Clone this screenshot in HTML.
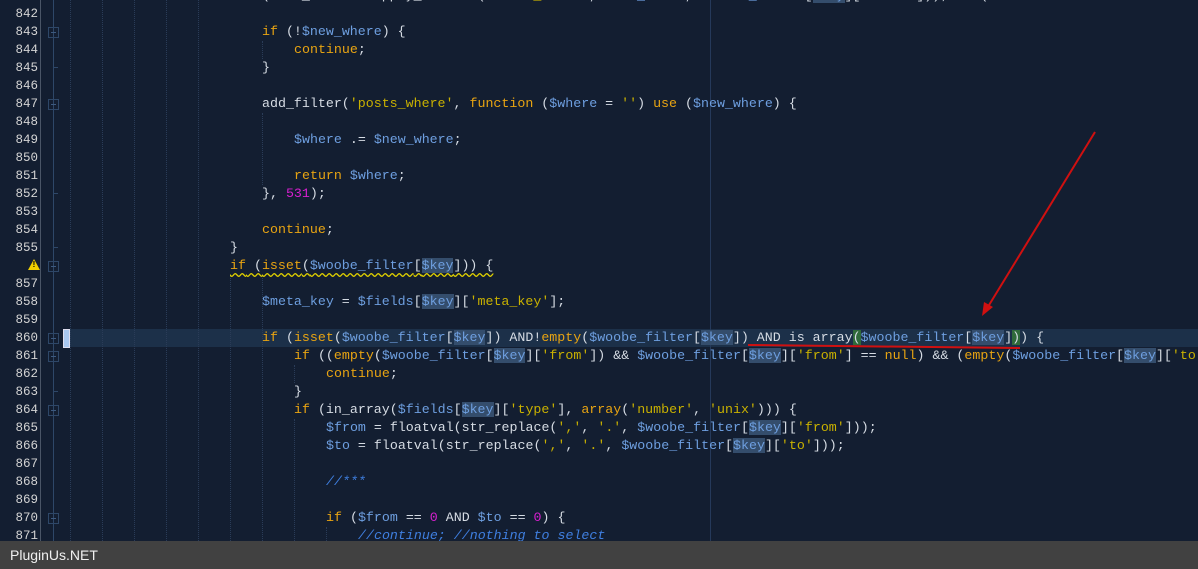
<!DOCTYPE html>
<html><head><meta charset="utf-8"><style>
html,body{margin:0;padding:0;}
body{width:1198px;height:569px;overflow:hidden;background:#131e31;position:relative;font-family:"Liberation Mono",monospace;font-size:13.3px;}
.ln{position:absolute;left:0;width:38px;text-align:right;color:#d4d4d4;height:18px;line-height:18px;font-size:12.5px;}
.c{position:absolute;height:18px;line-height:18px;white-space:pre;color:#d6dce4;}
.k{color:#e8a412}.v{color:#6e9fe0}.s{color:#c9b100}.n{color:#d81fd0}.cm{color:#3f7fe0;font-style:italic}
.h{background:#344d6c}
.g{background:#2f6a3a}
.guide{position:absolute;top:0;height:541px;border-left:1px dotted #2a3c58;}
.fold{position:absolute;left:48px;width:9px;height:9px;border:1px solid #2e4768;}
.fold:after{content:"";position:absolute;left:2px;top:4px;width:5px;height:1px;background:#3d5a80;}
.tick{position:absolute;left:53px;width:5px;height:1px;background:#2e4768;}
</style></head><body>
<div style="position:absolute;left:40px;top:0;width:1px;height:541px;background:#4a5566"></div>
<div style="position:absolute;left:53px;top:0;width:1px;height:541px;background:#2e4768"></div>
<div style="position:absolute;left:70px;top:329px;width:1128px;height:18px;background:#1c3049"></div>
<div style="position:absolute;left:63px;top:329px;width:5px;height:17px;background:#a9c8f0;border:1px solid #dde"></div>
<div class="guide" style="left:70px"></div><div class="guide" style="left:102px"></div><div class="guide" style="left:134px"></div><div class="guide" style="left:166px"></div><div class="guide" style="left:198px"></div>
<div class="guide" style="left:230px;top:275px;height:266px"></div>
<div class="guide" style="left:262px;top:41px;height:18px"></div>
<div class="guide" style="left:262px;top:113px;height:72px"></div>
<div class="guide" style="left:262px;top:275px;height:266px"></div>
<div class="guide" style="left:294px;top:365px;height:18px"></div>
<div class="guide" style="left:294px;top:419px;height:122px"></div>
<div class="guide" style="left:326px;top:527px;height:14px"></div>
<div style="position:absolute;left:710px;top:0;width:1px;height:541px;background:#25395a"></div>

<div class="ln" style="top:5px">842</div><div class="ln" style="top:23px">843</div><div class="ln" style="top:41px">844</div><div class="ln" style="top:59px">845</div><div class="ln" style="top:77px">846</div><div class="ln" style="top:95px">847</div><div class="ln" style="top:113px">848</div><div class="ln" style="top:131px">849</div><div class="ln" style="top:149px">850</div><div class="ln" style="top:167px">851</div><div class="ln" style="top:185px">852</div><div class="ln" style="top:203px">853</div><div class="ln" style="top:221px">854</div><div class="ln" style="top:239px">855</div>
<div style="position:absolute;left:28px;top:259px;width:0;height:0;border-left:6px solid transparent;border-right:6px solid transparent;border-bottom:11px solid #f0d000"></div>
<div style="position:absolute;left:28px;top:260px;width:12px;text-align:center;font:bold 8px 'Liberation Sans',sans-serif;color:#000">!</div>
<div class="ln" style="top:275px">857</div><div class="ln" style="top:293px">858</div><div class="ln" style="top:311px">859</div><div class="ln" style="top:329px">860</div><div class="ln" style="top:347px">861</div><div class="ln" style="top:365px">862</div><div class="ln" style="top:383px">863</div><div class="ln" style="top:401px">864</div><div class="ln" style="top:419px">865</div><div class="ln" style="top:437px">866</div><div class="ln" style="top:455px">867</div><div class="ln" style="top:473px">868</div><div class="ln" style="top:491px">869</div><div class="ln" style="top:509px">870</div><div class="ln" style="top:527px">871</div>
<div class="fold" style="top:27px"></div><div class="fold" style="top:99px"></div><div class="fold" style="top:261px"></div><div class="fold" style="top:333px"></div><div class="fold" style="top:351px"></div><div class="fold" style="top:405px"></div><div class="fold" style="top:513px"></div>
<div class="tick" style="top:67px"></div><div class="tick" style="top:193px"></div><div class="tick" style="top:247px"></div><div class="tick" style="top:391px"></div>

<div class="c" style="top:-13px;left:262px">(<span class="v">$new</span>_where = apply_filters(<span class="s">'woobe_where'</span>, <span class="v">$new_where</span>, <span class="v">$woobe_filter</span>[<span class="h"><span class="v">$key</span></span>][<span class="s">'value'</span>])); <span class="k">if</span> (</div>
<div class="c" style="top:23px;left:262px"><span class="k">if</span> (!<span class="v">$new_where</span>) {</div>
<div class="c" style="top:41px;left:294px"><span class="k">continue</span>;</div>
<div class="c" style="top:59px;left:262px">}</div>
<div class="c" style="top:95px;left:262px">add_filter(<span class="s">'posts_where'</span>, <span class="k">function</span> (<span class="v">$where</span> = <span class="s">''</span>) <span class="k">use</span> (<span class="v">$new_where</span>) {</div>
<div class="c" style="top:131px;left:294px"><span class="v">$where</span> .= <span class="v">$new_where</span>;</div>
<div class="c" style="top:167px;left:294px"><span class="k">return</span> <span class="v">$where</span>;</div>
<div class="c" style="top:185px;left:262px">}, <span class="n">531</span>);</div>
<div class="c" style="top:221px;left:262px"><span class="k">continue</span>;</div>
<div class="c" style="top:239px;left:230px">}</div>
<div class="c" style="top:257px;left:230px;text-decoration:underline wavy #e0d000;text-underline-offset:3px"><span class="k">if</span> (<span class="k">isset</span>(<span class="v">$woobe_filter</span>[<span class="h"><span class="v">$key</span></span>])) {</div>
<div class="c" style="top:293px;left:262px"><span class="v">$meta_key</span> = <span class="v">$fields</span>[<span class="h"><span class="v">$key</span></span>][<span class="s">'meta_key'</span>];</div>
<div class="c" style="top:329px;left:262px"><span class="k">if</span> (<span class="k">isset</span>(<span class="v">$woobe_filter</span>[<span class="h"><span class="v">$key</span></span>]) AND!<span class="k">empty</span>(<span class="v">$woobe_filter</span>[<span class="h"><span class="v">$key</span></span>]) AND is array<span class="g">(</span><span class="v">$woobe_filter</span>[<span class="h"><span class="v">$key</span></span>]<span class="g">)</span>) {</div>
<div class="c" style="top:347px;left:294px"><span class="k">if</span> ((<span class="k">empty</span>(<span class="v">$woobe_filter</span>[<span class="h"><span class="v">$key</span></span>][<span class="s">'from'</span>]) &amp;&amp; <span class="v">$woobe_filter</span>[<span class="h"><span class="v">$key</span></span>][<span class="s">'from'</span>] == <span class="k">null</span>) &amp;&amp; (<span class="k">empty</span>(<span class="v">$woobe_filter</span>[<span class="h"><span class="v">$key</span></span>][<span class="s">'to'</span>]</div>
<div class="c" style="top:365px;left:326px"><span class="k">continue</span>;</div>
<div class="c" style="top:383px;left:294px">}</div>
<div class="c" style="top:401px;left:294px"><span class="k">if</span> (in_array(<span class="v">$fields</span>[<span class="h"><span class="v">$key</span></span>][<span class="s">'type'</span>], <span class="k">array</span>(<span class="s">'number'</span>, <span class="s">'unix'</span>))) {</div>
<div class="c" style="top:419px;left:326px"><span class="v">$from</span> = floatval(str_replace(<span class="s">','</span>, <span class="s">'.'</span>, <span class="v">$woobe_filter</span>[<span class="h"><span class="v">$key</span></span>][<span class="s">'from'</span>]));</div>
<div class="c" style="top:437px;left:326px"><span class="v">$to</span> = floatval(str_replace(<span class="s">','</span>, <span class="s">'.'</span>, <span class="v">$woobe_filter</span>[<span class="h"><span class="v">$key</span></span>][<span class="s">'to'</span>]));</div>
<div class="c" style="top:473px;left:326px"><span class="cm">//***</span></div>
<div class="c" style="top:509px;left:326px"><span class="k">if</span> (<span class="v">$from</span> == <span class="n">0</span> AND <span class="v">$to</span> == <span class="n">0</span>) {</div>
<div class="c" style="top:527px;left:358px"><span class="cm">//continue; //nothing to select</span></div>

<svg style="position:absolute;left:0;top:0" width="1198" height="569">
<line x1="748" y1="345" x2="1020" y2="348" stroke="#d01010" stroke-width="2"/>
<line x1="1095" y1="132" x2="986" y2="310" stroke="#d01010" stroke-width="2"/>
<polygon points="982,316 984,302 993,307" fill="#d01010"/>
</svg>
<div style="position:absolute;left:0;top:541px;width:1198px;height:28px;background:#414141;color:#f0f0f0;font:14px 'Liberation Sans',sans-serif;line-height:28px;padding-left:10px;box-sizing:border-box">PluginUs.NET</div>
</body></html>
